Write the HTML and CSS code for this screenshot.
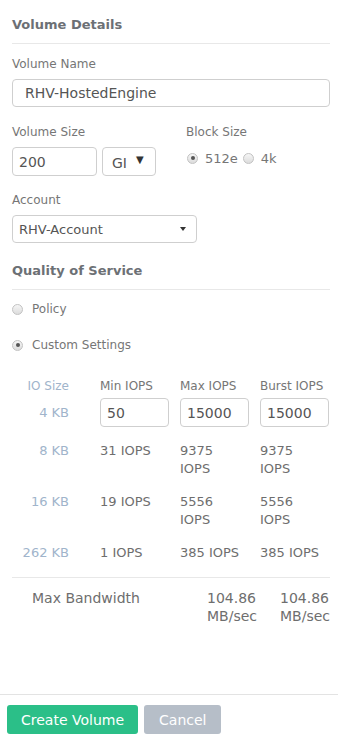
FILE: index.html
```html
<!DOCTYPE html>
<html lang="en">
<head>
    <meta charset="UTF-8">
    <meta name="viewport" content="width=device-width, initial-scale=1.0">
    <title>Create Volume</title>
    <link rel="stylesheet" href="styles.css">
</head>
<body>
    <div class="page">
        <div class="content">
            <h3 class="section-title">Volume Details</h3>

            <div class="field">
                <label class="field-label">Volume Name</label>
                <input class="text-input name-input" type="text" value="RHV-HostedEngine">
            </div>

            <div class="size-row">
                <div class="size-col">
                    <label class="field-label">Volume Size</label>
                    <div class="size-inputs">
                        <input class="text-input size-input" type="text" value="200">
                        <div class="unit-select">GI <span class="unit-arrow">&#9660;</span></div>
                    </div>
                </div>
                <div class="block-col">
                    <label class="field-label">Block Size</label>
                    <div class="block-radios">
                        <span class="radio checked"></span><span class="radio-text">512e</span>
                        <span class="radio"></span><span class="radio-text">4k</span>
                    </div>
                </div>
            </div>

            <div class="field account-field">
                <label class="field-label">Account</label>
                <div class="select-box">
                    <span>RHV-Account</span>
                    <span class="caret"></span>
                </div>
            </div>

            <h3 class="section-title qos-title">Quality of Service</h3>

            <div class="radio-row policy-row">
                <span class="radio"></span><span class="radio-label">Policy</span>
            </div>
            <div class="radio-row custom-row">
                <span class="radio checked"></span><span class="radio-label">Custom Settings</span>
            </div>

            <div class="iops-table">
                <div class="io-size head">IO Size</div>
                <div class="col-head">Min IOPS</div>
                <div class="col-head">Max IOPS</div>
                <div class="col-head">Burst IOPS</div>

                <div class="io-size input-row">4 KB</div>
                <div class="input-row"><input class="text-input iops-input" type="text" value="50"></div>
                <div class="input-row"><input class="text-input iops-input" type="text" value="15000"></div>
                <div class="input-row"><input class="text-input iops-input" type="text" value="15000"></div>

                <div class="io-size data-row">8 KB</div>
                <div class="cell data-row">31 IOPS</div>
                <div class="cell data-row">9375 IOPS</div>
                <div class="cell data-row">9375 IOPS</div>

                <div class="io-size data-row">16 KB</div>
                <div class="cell data-row">19 IOPS</div>
                <div class="cell data-row">5556 IOPS</div>
                <div class="cell data-row">5556 IOPS</div>

                <div class="io-size data-row">262 KB</div>
                <div class="cell data-row">1 IOPS</div>
                <div class="cell data-row">385 IOPS</div>
                <div class="cell data-row">385 IOPS</div>
            </div>

            <div class="bandwidth">
                <div class="bw-label">Max Bandwidth</div>
                <div class="bw-value">104.86 MB/sec</div>
                <div class="bw-value">104.86 MB/sec</div>
            </div>
        </div>

        <div class="footer">
            <button class="btn btn-create">Create Volume</button>
            <button class="btn btn-cancel">Cancel</button>
        </div>
    </div>
</body>
</html>
```

FILE: styles.css
```css
body {
    margin: 0;
    padding: 0;
    background: #fff;
    font-family: "DejaVu Sans", Verdana, sans-serif;
    color: #707070;
}

.page {
    min-height: 100vh;
    display: flex;
    flex-direction: column;
}

.content {
    padding: 17px 8px 0 12px;
}

.section-title {
    margin: 0;
    font-size: 13px;
    font-weight: bold;
    line-height: 16px;
    color: #6c7075;
    padding-bottom: 10px;
    border-bottom: 1px solid #e8e8e8;
}

.field {
    margin-top: 13px;
}

.field-label {
    display: block;
    font-size: 12px;
    line-height: 15px;
    color: #767676;
    margin-bottom: 7px;
}

.text-input {
    box-sizing: border-box;
    border: 1px solid #cfcfcf;
    border-radius: 4px;
    font-family: "DejaVu Sans", Verdana, sans-serif;
    font-size: 14px;
    color: #555;
    background: #fff;
    outline: none;
    margin: 0;
}

.name-input {
    width: 318px;
    height: 28px;
    padding: 0 12px;
}

.size-row {
    display: flex;
    margin-top: 18px;
}

.size-col {
    width: 174px;
}

.size-inputs {
    display: flex;
    gap: 5px;
}

.size-input {
    width: 85px;
    height: 29px;
    padding: 0 6px;
}

.unit-select {
    box-sizing: border-box;
    width: 54px;
    height: 29px;
    border: 1px solid #cfcfcf;
    border-radius: 4px;
    display: flex;
    align-items: center;
    padding: 2px 0 0 9px;
    font-size: 14px;
    color: #555;
}

.unit-arrow {
    font-size: 10px;
    color: #333;
    margin-left: 9px;
    margin-top: -6px;
}

.block-radios {
    display: flex;
    align-items: center;
    height: 22px;
    padding-left: 1px;
}

.radio {
    box-sizing: border-box;
    display: inline-block;
    width: 11px;
    height: 11px;
    border-radius: 50%;
    border: 1px solid #c2c2c2;
    background: linear-gradient(#f6f6f6, #dcdcdc);
    position: relative;
    flex-shrink: 0;
}

.radio.checked::after {
    content: "";
    position: absolute;
    left: 2.5px;
    top: 2.5px;
    width: 4px;
    height: 4px;
    border-radius: 50%;
    background: #555;
}

.radio-text {
    font-size: 13px;
    color: #767676;
    margin: 0 5px 0 7px;
}

.account-field {
    margin-top: 17px;
}

.select-box {
    box-sizing: border-box;
    width: 185px;
    height: 28px;
    border: 1px solid #cfcfcf;
    border-radius: 4px;
    display: flex;
    align-items: center;
    justify-content: space-between;
    padding: 0 10px 0 6px;
    font-size: 13px;
    color: #555;
}

.caret {
    width: 0;
    height: 0;
    border-left: 3.5px solid transparent;
    border-right: 3.5px solid transparent;
    border-top: 4px solid #333;
}

.qos-title {
    margin-top: 20px;
}

.radio-row {
    display: flex;
    align-items: center;
    height: 16px;
}

.policy-row {
    margin-top: 11px;
}

.custom-row {
    margin-top: 20px;
}

.radio-label {
    font-size: 12px;
    color: #767676;
    margin-left: 9px;
}

.iops-table {
    display: grid;
    grid-template-columns: 88px 80px 80px 70px;
    margin-top: 25px;
    padding-bottom: 15px;
    border-bottom: 1px solid #e8e8e8;
}

.io-size {
    text-align: right;
    padding-right: 31px;
    font-size: 13px;
    line-height: 18px;
    color: #a0b4cb;
}

.io-size.head {
    font-size: 12px;
    line-height: 16px;
}

.col-head {
    font-size: 12px;
    line-height: 16px;
    color: #767676;
    white-space: nowrap;
}

.input-row {
    margin-top: 4px;
}

.io-size.input-row {
    align-self: center;
}

.iops-input {
    width: 69px;
    height: 29px;
    padding: 0 6px;
}

.data-row {
    margin-top: 15px;
}

.cell {
    width: 64px;
    font-size: 13px;
    line-height: 18px;
    color: #6e6e6e;
}

.bandwidth {
    display: grid;
    grid-template-columns: 1fr 73px 50px;
    margin-top: 11px;
    font-size: 14px;
    line-height: 18px;
    color: #6e6e6e;
}

.bw-label {
    padding-left: 20px;
}

.footer {
    margin-top: auto;
    border-top: 1px solid #e3e3e3;
    padding: 10px 7px 7px;
    display: flex;
    gap: 6px;
}

.btn {
    height: 29px;
    border: none;
    border-radius: 3px;
    padding: 0 14px;
    font-family: "DejaVu Sans", Verdana, sans-serif;
    font-size: 14px;
    color: #fff;
    cursor: pointer;
}

.btn-create {
    background: #2bbf88;
}

.btn-cancel {
    padding: 0 15px;
    background: #b6bec8;
}
```
